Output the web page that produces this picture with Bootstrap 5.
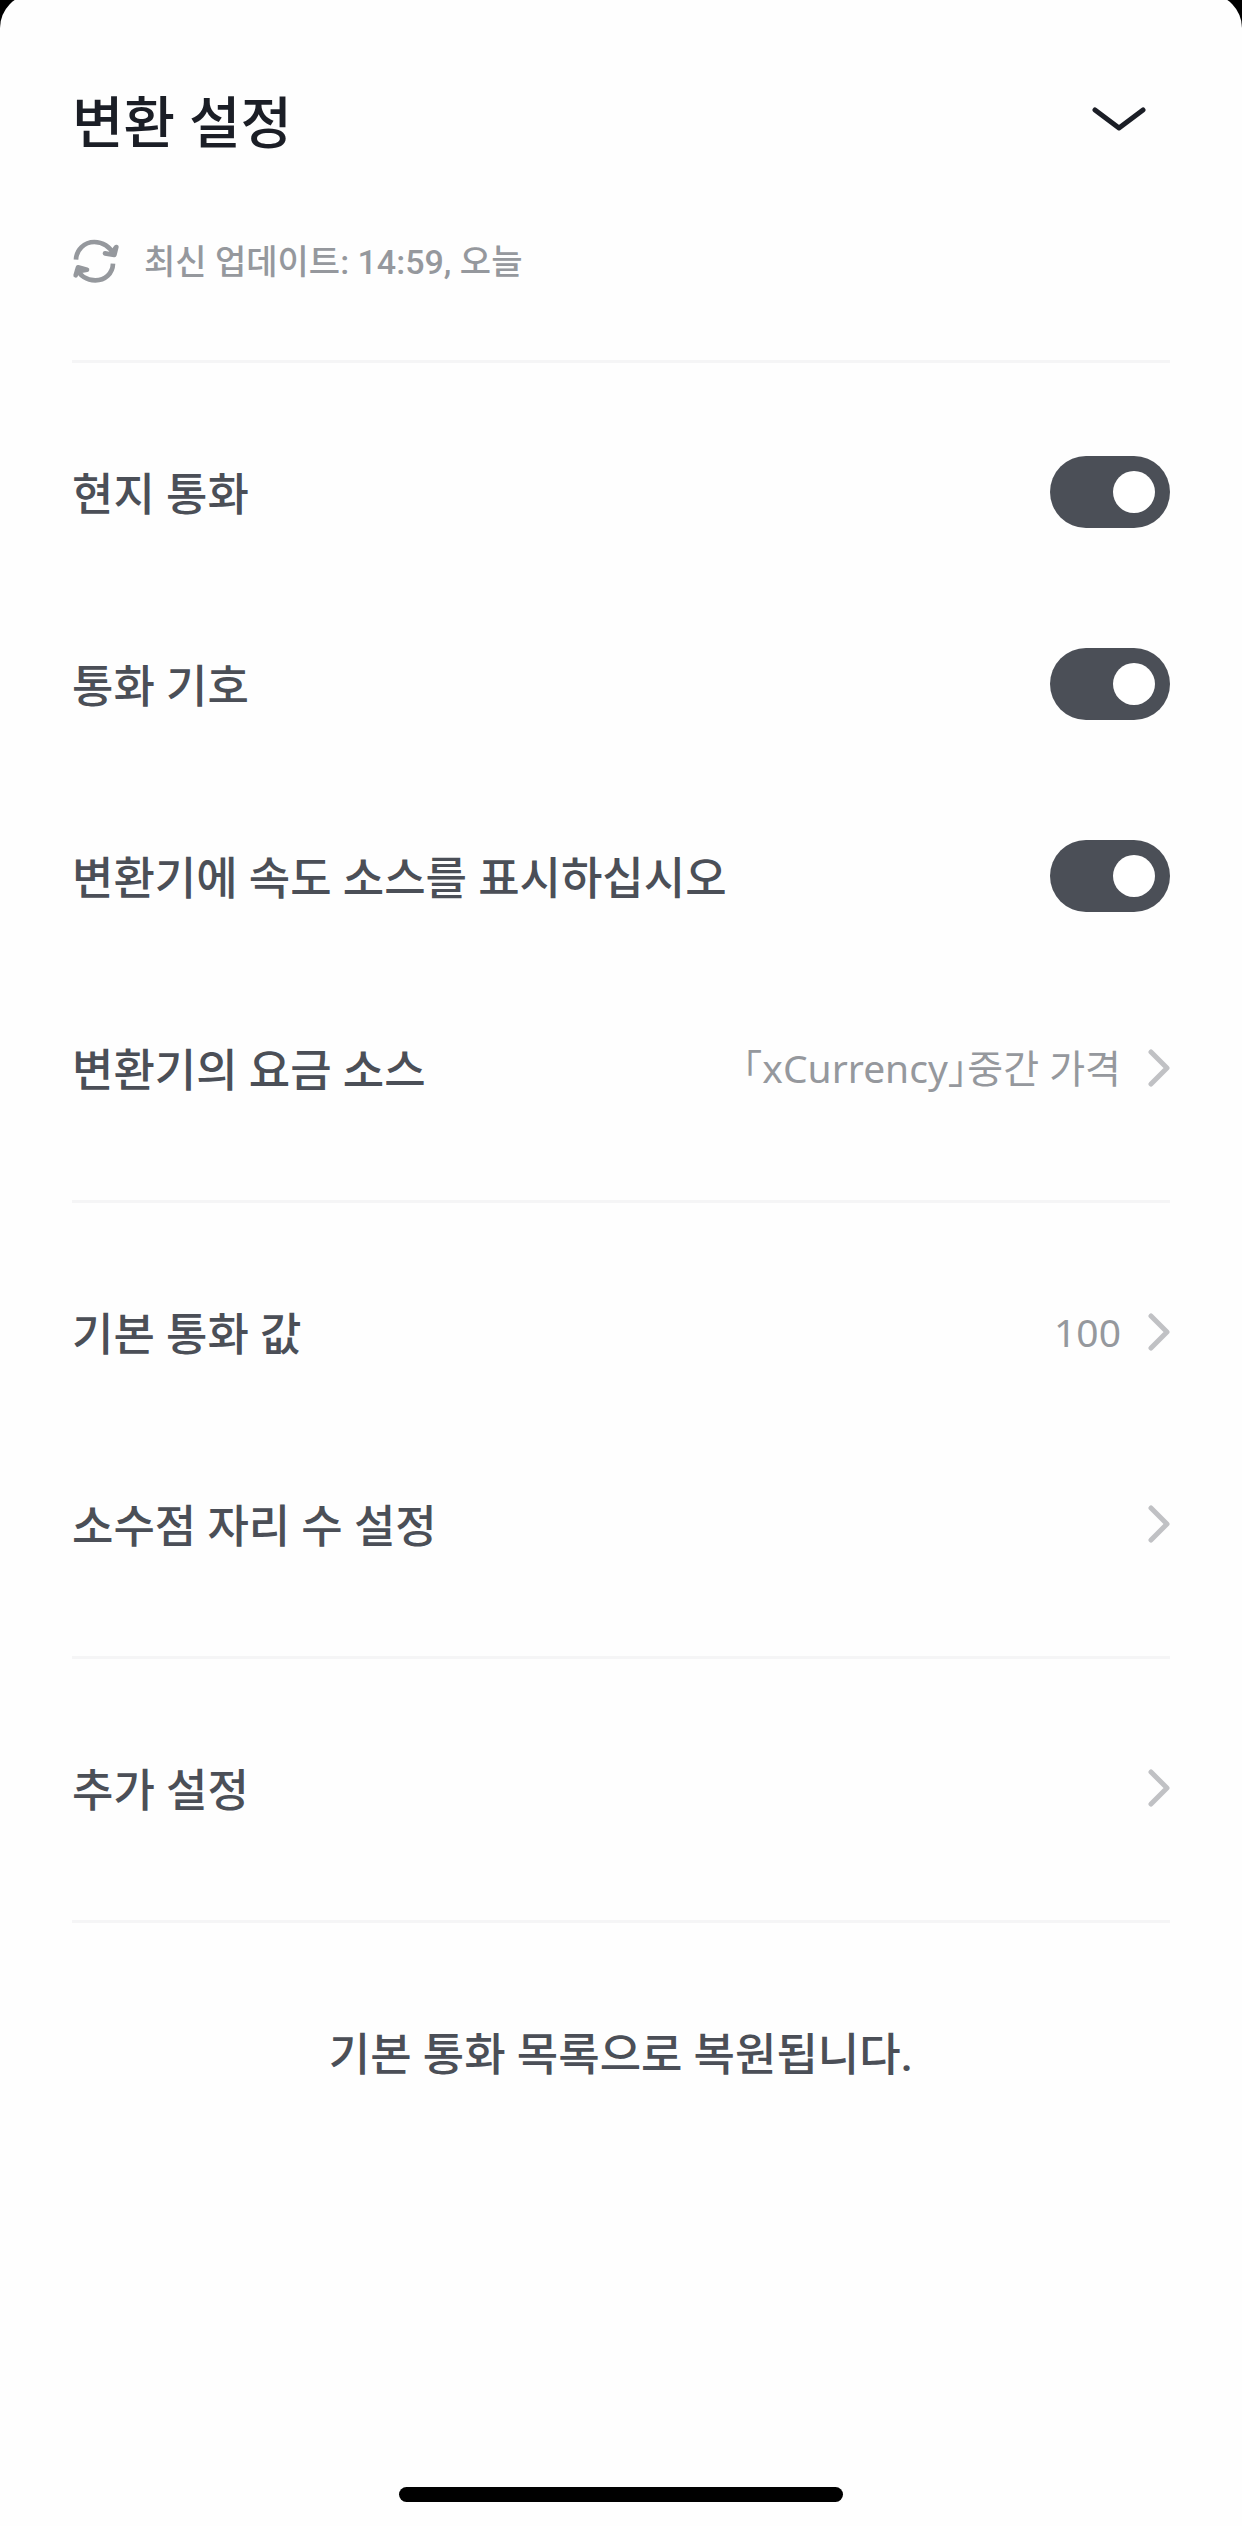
<!DOCTYPE html>
<html lang="ko">
<head>
<meta charset="utf-8">
<meta name="viewport" content="width=device-width, initial-scale=1">
<title>변환 설정</title>
<link href="https://cdn.jsdelivr.net/npm/bootstrap@5.3.0/dist/css/bootstrap.min.css" rel="stylesheet">
<style>
  :root { --ink: #1b1e26; --label: #4b4f57; --muted: #95989d; --rule: #f5f5f6; }
  body { background: #000; font-family: Roboto, "Noto Sans CJK KR", sans-serif; color: var(--label); }
  .sheet { background: #fefefe; border-radius: 34px 34px 0 0; margin-top: -6px; min-height: calc(100vh + 6px); padding: 86px 72px 24px; }
  .sheet-title { font-size: 56px; line-height: 72px; font-weight: 500; color: var(--ink); padding-top: 8px; }
  .close-btn { width: 102px; height: 72px; color: var(--ink); }
  .updated { font-size: 34px; line-height: 48px; font-weight: 500; color: var(--muted); gap: 24px; padding: 76px 0 74px; }
  .updated span { padding-top: 2px; }
  .group { border-bottom: 3px solid var(--rule); padding: 33px 0 36px; }
  .head-rule { border-bottom: 3px solid var(--rule); }
  .group.last-group { border-bottom: 0; }
  .setting { height: 192px; font-size: 45px; line-height: 60px; font-weight: 500; color: var(--label); }
  .setting-name { padding-top: 8px; }
  .setting-value { font-family: "Noto Sans", "Noto Sans CJK KR", sans-serif; font-size: 39px; font-weight: 400; color: var(--muted); font-feature-settings: "halt"; }
  .trail { gap: 27px; }
  .arrow { color: #c0c1c4; }
  .form-switch .form-check-input.toggle { width: 120px; height: 72px; margin: 0; border: 0; background-color: #cfd1d4; background-size: 56px 56px; background-position: left 8px center; border-radius: 36px; }
  .form-switch .form-check-input.toggle:checked { background-color: var(--label); background-position: right 8px center; }
  .home-bar { width: 444px; height: 15px; background: #000; }
</style>
</head>
<body>
<main class="sheet d-flex flex-column">
  <header class="head-rule">
    <div class="d-flex align-items-center justify-content-between">
      <h1 class="sheet-title mb-0">변환 설정</h1>
      <button type="button" class="close-btn btn p-0 border-0 d-flex align-items-center justify-content-center" aria-label="닫기">
        <svg width="54" height="26" viewBox="0 0 54 26" fill="none" stroke="currentColor" stroke-width="5" stroke-linecap="round" stroke-linejoin="round"><path d="M3 3 27 21 51 3"/></svg>
      </button>
    </div>
    <div class="updated d-flex align-items-center">
      <svg width="48" height="44" viewBox="0 0 144 132" fill="none" stroke="currentColor" stroke-width="14" stroke-linecap="round" stroke-linejoin="round" aria-hidden="true">
        <path stroke-linecap="butt" d="M12 62C13 32 37 9 67 9c25 0 47 14 57 36"/>
        <path d="M99 43l28 5 6-24-14 18"/>
        <path stroke-linecap="butt" d="M123 74c-1 30-24 50-53 50-26 0-47-14-55-36"/>
        <path d="M11 109l7-24 27 7-21 4"/>
      </svg>
      <span>최신 업데이트: 14:59, 오늘</span>
    </div>
  </header>

  <section class="group">
    <div class="setting form-switch d-flex align-items-center justify-content-between p-0">
      <label class="setting-name" for="localCurrency">현지 통화</label>
      <input class="form-check-input toggle" type="checkbox" role="switch" id="localCurrency" checked>
    </div>
    <div class="setting form-switch d-flex align-items-center justify-content-between p-0">
      <label class="setting-name" for="currencySymbol">통화 기호</label>
      <input class="form-check-input toggle" type="checkbox" role="switch" id="currencySymbol" checked>
    </div>
    <div class="setting form-switch d-flex align-items-center justify-content-between p-0">
      <label class="setting-name" for="showSource">변환기에 속도 소스를 표시하십시오</label>
      <input class="form-check-input toggle" type="checkbox" role="switch" id="showSource" checked>
    </div>
    <a href="#" class="setting d-flex align-items-center justify-content-between text-decoration-none">
      <span class="setting-name">변환기의 요금 소스</span>
      <span class="trail d-flex align-items-center">
        <span class="setting-value">「xCurrency」중간 가격</span>
        <svg class="arrow" width="22" height="38" viewBox="0 0 22 38" fill="none" stroke="currentColor" stroke-width="5" stroke-linecap="round" stroke-linejoin="round"><path d="M3 3 19 19 3 35"/></svg>
      </span>
    </a>
  </section>

  <section class="group">
    <a href="#" class="setting d-flex align-items-center justify-content-between text-decoration-none">
      <span class="setting-name">기본 통화 값</span>
      <span class="trail d-flex align-items-center">
        <span class="setting-value">100</span>
        <svg class="arrow" width="22" height="38" viewBox="0 0 22 38" fill="none" stroke="currentColor" stroke-width="5" stroke-linecap="round" stroke-linejoin="round"><path d="M3 3 19 19 3 35"/></svg>
      </span>
    </a>
    <a href="#" class="setting d-flex align-items-center justify-content-between text-decoration-none">
      <span class="setting-name">소수점 자리 수 설정</span>
      <svg class="arrow" width="22" height="38" viewBox="0 0 22 38" fill="none" stroke="currentColor" stroke-width="5" stroke-linecap="round" stroke-linejoin="round"><path d="M3 3 19 19 3 35"/></svg>
    </a>
  </section>

  <section class="group">
    <a href="#" class="setting d-flex align-items-center justify-content-between text-decoration-none">
      <span class="setting-name">추가 설정</span>
      <svg class="arrow" width="22" height="38" viewBox="0 0 22 38" fill="none" stroke="currentColor" stroke-width="5" stroke-linecap="round" stroke-linejoin="round"><path d="M3 3 19 19 3 35"/></svg>
    </a>
  </section>

  <section class="group last-group">
    <button type="button" class="setting btn w-100 p-0 border-0 d-flex align-items-center justify-content-center"><span class="setting-name">기본 통화 목록으로 복원됩니다.</span></button>
  </section>

  <div class="home-bar rounded-pill mt-auto mx-auto"></div>
</main>
<script src="https://cdn.jsdelivr.net/npm/bootstrap@5.3.0/dist/js/bootstrap.bundle.min.js"></script>
</body>
</html>
